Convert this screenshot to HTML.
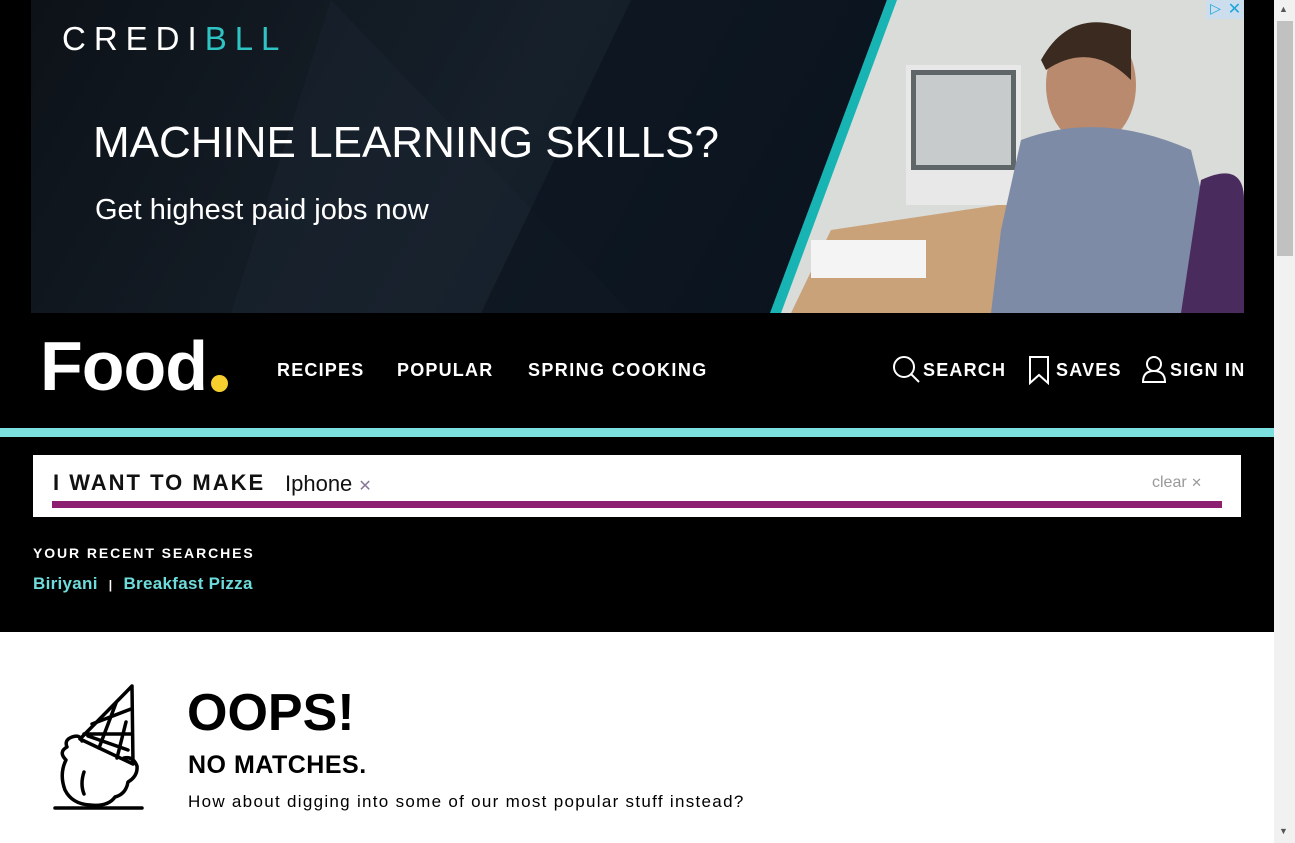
<!DOCTYPE html>
<html><head><meta charset="utf-8"><style>
*{margin:0;padding:0;box-sizing:border-box}
body{width:1295px;height:843px;overflow:hidden;background:#fff;font-family:"Liberation Sans",sans-serif;position:relative}
.a{position:absolute;white-space:nowrap}
</style></head><body>
<div class="a" style="left:0;top:0;width:1274px;height:632px;background:#000"></div>
<!-- ad -->
<div class="a" style="left:31px;top:0;width:1213px;height:313px;background:linear-gradient(120deg,#0d1218 0%,#16202b 40%,#0b1622 70%,#070b12 100%);overflow:hidden">
  <svg class="a" style="left:0;top:0" width="1213" height="313">
    <polygon points="300,0 600,313 200,313" fill="#1a2430" opacity=".5"/>
    <polygon points="600,0 860,0 740,313 450,313" fill="#0a121c" opacity=".6"/>
    <polygon points="856,0 1213,0 1213,313 740,313" fill="#d9dcd8"/>
    <polygon points="856,0 866,0 750,313 739,313" fill="#18b4b4"/>
    <polygon points="800,230 1000,200 1040,313 760,313" fill="#c9a27a"/>
    <rect x="875" y="65" width="115" height="140" fill="#e8e8e8"/>
    <rect x="880" y="70" width="105" height="100" fill="#5f6668"/>
    <rect x="885" y="75" width="95" height="90" fill="#c7cbcc"/>
    <ellipse cx="1060" cy="85" rx="45" ry="60" fill="#b98a6e"/>
    <path d="M1010 60 Q1040 5 1100 30 L1100 80 Q1060 40 1015 70Z" fill="#3a2a20"/>
    <path d="M990 140 Q1070 110 1160 150 L1200 313 L960 313 L970 230Z" fill="#7d8ba6"/>
    <path d="M1170 180 Q1213 160 1213 200 L1213 313 L1150 313Z" fill="#4a2b5e"/>
    <rect x="780" y="240" width="115" height="38" fill="#f4f4f4"/>
  </svg>
  <div class="a" style="left:31px;top:20px;color:#fff;font-size:33px;letter-spacing:8px">CREDI<span style="color:#2ec4c4">BLL</span></div>
  <div class="a" style="left:62px;top:118px;color:#fff;font-size:44px;letter-spacing:0">MACHINE LEARNING SKILLS?</div>
  <div class="a" style="left:64px;top:194px;color:#fff;font-size:29px">Get highest paid jobs now</div>
  <div class="a" style="left:1175px;top:0;width:19px;height:19px;background:#cde;color:#1aa6d9;font-size:14px;text-align:center">▷</div>
  <div class="a" style="left:1194px;top:0;width:19px;height:19px;background:#cde;color:#1aa6d9;font-size:16px;text-align:center;line-height:19px">✕</div>
</div>
<!-- nav -->
<div class="a" style="left:40px;top:326px;color:#fff;font-size:70px;font-weight:bold;letter-spacing:-1px">Food</div>
<div class="a" style="left:211px;top:375px;width:17px;height:17px;border-radius:50%;background:#f6cf2e"></div>
<div class="a" style="left:277px;top:360px;color:#fff;font-size:18px;font-weight:bold;letter-spacing:1.2px">RECIPES</div>
<div class="a" style="left:397px;top:360px;color:#fff;font-size:18px;font-weight:bold;letter-spacing:1.2px">POPULAR</div>
<div class="a" style="left:528px;top:360px;color:#fff;font-size:18px;font-weight:bold;letter-spacing:1.4px">SPRING COOKING</div>
<svg class="a" style="left:892px;top:355px" width="30" height="30"><circle cx="12" cy="12" r="10" fill="none" stroke="#fff" stroke-width="2"/><line x1="19" y1="19" x2="27" y2="27" stroke="#fff" stroke-width="2"/></svg>
<div class="a" style="left:923px;top:360px;color:#fff;font-size:18px;font-weight:bold;letter-spacing:1.2px">SEARCH</div>
<svg class="a" style="left:1028px;top:355px" width="24" height="30"><path d="M2 2 H20 V28 L11 20 L2 28 Z" fill="none" stroke="#fff" stroke-width="2"/></svg>
<div class="a" style="left:1056px;top:360px;color:#fff;font-size:18px;font-weight:bold;letter-spacing:1.2px">SAVES</div>
<svg class="a" style="left:1140px;top:354px" width="28" height="30"><circle cx="14" cy="10" r="7" fill="none" stroke="#fff" stroke-width="2"/><path d="M3 28 Q3 17 14 17 Q25 17 25 28 Z" fill="none" stroke="#fff" stroke-width="2"/></svg>
<div class="a" style="left:1170px;top:360px;color:#fff;font-size:18px;font-weight:bold;letter-spacing:1.2px">SIGN IN</div>
<div class="a" style="left:0;top:428px;width:1274px;height:9px;background:#7ce0e0"></div>
<!-- search -->
<div class="a" style="left:33px;top:455px;width:1208px;height:62px;background:#fff"></div>
<div class="a" style="left:53px;top:470px;color:#111;font-size:22px;font-weight:bold;letter-spacing:2px">I WANT TO MAKE</div>
<div class="a" style="left:285px;top:471px;color:#111;font-size:22px">Iphone <span style="color:#8a7a9a;font-size:16px">✕</span></div>
<div class="a" style="left:1152px;top:474px;color:#999;font-size:16px">clear <span style="font-size:13px">✕</span></div>
<div class="a" style="left:52px;top:501px;width:1170px;height:7px;background:#8c1f6f"></div>
<div class="a" style="left:33px;top:545px;color:#fff;font-size:14px;font-weight:bold;letter-spacing:1.9px">YOUR RECENT SEARCHES</div>
<div class="a" style="left:33px;top:574px;color:#6fdcdc;font-size:17px;font-weight:bold;letter-spacing:0.3px">Biriyani <span style="color:#fff;font-size:12px;margin:0 6px">|</span> Breakfast Pizza</div>
<!-- oops -->
<svg class="a" style="left:50px;top:684px" width="100" height="130" fill="none" stroke="#000" stroke-width="3.5" stroke-linecap="round" stroke-linejoin="round">
<path d="M82 2 L30 55 L83 80 Z"/>
<path d="M66 19 L49 64 M76 38 L67 74 M42 40 L81 25 M34 50 L82 50 M38 52 L78 66"/>
<path d="M32 57 Q30 50 22 53 Q14 56 17 63 Q8 68 16 76 Q9 90 15 106 Q22 120 40 121 Q58 123 65 113 Q76 110 78 98 Q88 92 87 82 Q83 72 74 74"/>
<path d="M34 88 Q30 100 34 110"/>
<line x1="5" y1="124" x2="92" y2="124"/>
</svg>
<div class="a" style="left:187px;top:683px;color:#000;font-size:52px;font-weight:bold;letter-spacing:0">OOPS!</div>
<div class="a" style="left:188px;top:751px;color:#000;font-size:25px;font-weight:bold;letter-spacing:0.5px">NO MATCHES.</div>
<div class="a" style="left:188px;top:792px;color:#000;font-size:17px;letter-spacing:1.3px">How about digging into some of our most popular stuff instead?</div>
<!-- scrollbar -->
<div class="a" style="left:1274px;top:0;width:21px;height:843px;background:#f1f1f1"></div>
<div class="a" style="left:1277px;top:21px;width:16px;height:235px;background:#c1c1c1"></div>
<div class="a" style="left:1279px;top:4px;color:#555;font-size:9px">▲</div>
<div class="a" style="left:1279px;top:826px;color:#555;font-size:9px">▼</div>
</body></html>
